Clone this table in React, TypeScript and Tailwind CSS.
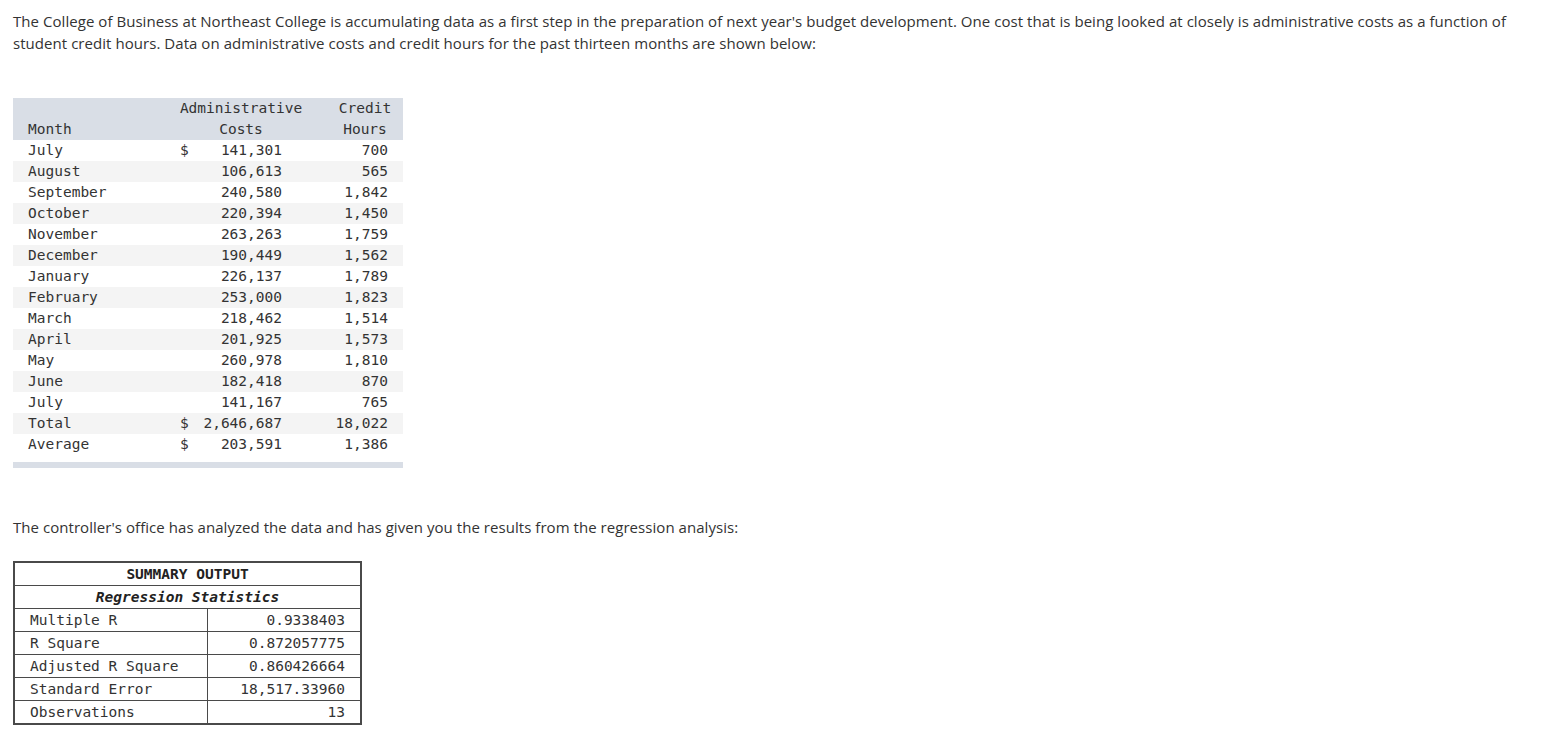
import React from "react";

const rows: [string, string, string, string][] = [
  ["July", "$", "141,301", "700"],
  ["August", "", "106,613", "565"],
  ["September", "", "240,580", "1,842"],
  ["October", "", "220,394", "1,450"],
  ["November", "", "263,263", "1,759"],
  ["December", "", "190,449", "1,562"],
  ["January", "", "226,137", "1,789"],
  ["February", "", "253,000", "1,823"],
  ["March", "", "218,462", "1,514"],
  ["April", "", "201,925", "1,573"],
  ["May", "", "260,978", "1,810"],
  ["June", "", "182,418", "870"],
  ["July", "", "141,167", "765"],
  ["Total", "$", "2,646,687", "18,022"],
  ["Average", "$", "203,591", "1,386"],
];

const stats: [string, string][] = [
  ["Multiple R", "0.9338403"],
  ["R Square", "0.872057775"],
  ["Adjusted R Square", "0.860426664"],
  ["Standard Error", "18,517.33960"],
  ["Observations", "13"],
];

export default function App() {
  return (
    <div className="min-h-screen bg-white text-[#333333] [font-family:'Open_Sans','Noto_Sans',sans-serif]">
      <div className="px-[13px] pt-[10px] pr-[40px]">
        <p className="text-[15px] leading-[22px] tracking-[0.05px]">
          The College of Business at Northeast College is accumulating data as a first step in the preparation of next year's budget development. One cost that is being looked at closely is administrative costs as a function of student credit hours. Data on administrative costs and credit hours for the past thirteen months are shown below:
        </p>

        <div className="mt-[44px] w-[390px] text-[14.5px] leading-[21px] text-[#333] [font-family:'DejaVu_Sans_Mono',monospace]">
          <div className="flex bg-[#d9dee6]">
            <div className="w-[157px] pl-[15px] flex flex-col justify-end">Month</div>
            <div className="w-[142px] text-center">
              <div>Administrative</div>
              <div>Costs</div>
            </div>
            <div className="w-[91px] pl-[15px] text-center">
              <div>Credit</div>
              <div>Hours</div>
            </div>
          </div>
          {rows.map((r, i) => (
            <div key={i} className={`flex ${i % 2 === 1 ? "bg-[#f4f4f4]" : "bg-white"}`}>
              <div className="w-[157px] pl-[15px]">{r[0]}</div>
              <div className="w-[142px] pl-[10px] pr-[30px] flex justify-between">
                <span>{r[1]}</span>
                <span>{r[2]}</span>
              </div>
              <div className="w-[91px] pr-[15px] text-right">{r[3]}</div>
            </div>
          ))}
          <div className="h-[7px]" />
          <div className="h-[6px] bg-[#d9dee6]" />
        </div>

        <p className="mt-[48px] text-[15px] leading-[22px] tracking-[0.05px]">
          The controller's office has analyzed the data and has given you the results from the regression analysis:
        </p>

        <table className="mt-[23px] w-[349px] border-collapse border-2 border-[#4a4a4a] text-[14.5px] leading-[22px] text-[#333] [font-family:'DejaVu_Sans_Mono',monospace]">
          <tbody>
            <tr>
              <td colSpan={2} className="border border-[#4a4a4a] text-center font-bold text-[#222]">
                SUMMARY OUTPUT
              </td>
            </tr>
            <tr>
              <td colSpan={2} className="border border-[#4a4a4a] text-center font-bold italic text-[#222]">
                Regression Statistics
              </td>
            </tr>
            {stats.map((s, i) => (
              <tr key={i}>
                <td className="w-[193px] border border-[#4a4a4a] pl-[15px]">{s[0]}</td>
                <td className="border border-[#4a4a4a] pr-[15px] text-right">{s[1]}</td>
              </tr>
            ))}
          </tbody>
        </table>
      </div>
    </div>
  );
}
